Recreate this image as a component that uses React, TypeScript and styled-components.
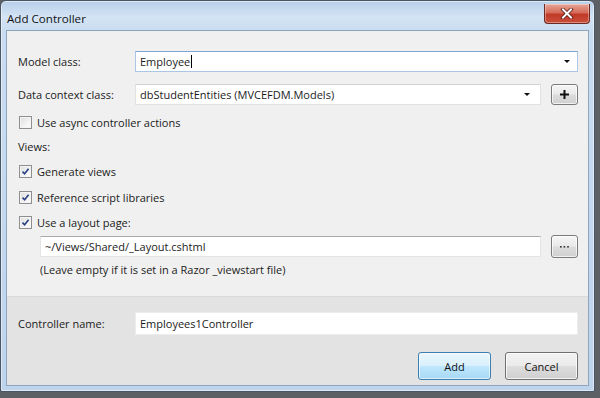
import styled, { createGlobalStyle } from "styled-components";

const GlobalStyle = createGlobalStyle`
  html, body {
    margin: 0;
    padding: 0;
    background: #5d6064;
  }
  body {
    width: 600px;
    height: 398px;
    overflow: hidden;
    font-family: "Open Sans", "Liberation Sans", sans-serif;
    font-size: 11px;
    color: #1b1b1b;
  }
`;

const Window = styled.div`
  width: 595px;
  height: 392px;
  box-sizing: border-box;
  border: 1px solid #4a5663;
  border-radius: 6px 6px 2px 2px;
  background: linear-gradient(180deg, #b7cfe9 0%, #d4e4f5 16px, #c9dcf1 30px, #bed4ed 100%);
  box-shadow: inset 0 0 0 1px rgba(255, 255, 255, 0.5);
  padding: 0 5px 5px 5px;
  display: flex;
  flex-direction: column;
`;

const TitleBar = styled.div`
  height: 29px;
  display: flex;
  justify-content: space-between;
  align-items: flex-start;
  flex: none;
`;

const Title = styled.div`
  margin-top: 10px;
  margin-left: 1px;
  line-height: 16px;
  font-size: 11.6px;
  color: #111;
`;

const CloseBtn = styled.div`
  width: 46px;
  height: 20px;
  margin-top: 3px;
  margin-right: -1px;
  box-sizing: border-box;
  border: 1px solid #6e2a22;
  border-top: none;
  border-radius: 0 0 4px 4px;
  background: linear-gradient(180deg, #e7a797 0%, #d56b5a 45%, #c13a27 55%, #c9503c 100%);
  box-shadow: inset 0 0 0 1px rgba(255, 255, 255, 0.35);
  display: flex;
  align-items: center;
  justify-content: center;
`;

const Client = styled.div`
  flex: 1;
  border: 1px solid #8ea5be;
  display: flex;
  flex-direction: column;
  background: #f0f0f0;
`;

const TopSection = styled.div`
  height: 265px;
  flex: none;
  box-sizing: border-box;
  padding: 20px 10px 0 11px;
  background: #f0f0f0;
  display: flex;
  flex-direction: column;
`;

const BottomSection = styled.div`
  flex: 1;
  box-sizing: border-box;
  border-top: 1px solid #dadada;
  background: #e3e3e3;
  padding: 15px 10px 0 11px;
  display: flex;
  flex-direction: column;
`;

const FieldRow = styled.div<{ $mt?: number; $h?: number }>`
  display: grid;
  grid-template-columns: 117px 1fr;
  align-items: center;
  height: ${(p) => p.$h ?? 21}px;
  margin-top: ${(p) => p.$mt ?? 0}px;
`;

const InputWithButton = styled.div`
  display: flex;
  gap: 10px;
  height: 100%;
`;

const Label = styled.span`
  white-space: nowrap;
`;

const TextBox = styled.div<{ $border: string; $top?: string }>`
  flex: 1;
  height: 100%;
  box-sizing: border-box;
  background: #fff;
  border: 1px solid ${(p) => p.$border};
  border-top-color: ${(p) => p.$top ?? p.$border};
  display: flex;
  align-items: center;
  padding: 0 4px;
  white-space: nowrap;
`;

const Caret = styled.span`
  display: inline-block;
  width: 1px;
  height: 13px;
  background: #000;
  margin-left: 1px;
`;

const Arrow = styled.span<{ $mr?: number }>`
  margin-left: auto;
  width: 0;
  height: 0;
  border-left: 3px solid transparent;
  border-right: 3px solid transparent;
  border-top: 3px solid #111;
  margin-right: ${(p) => p.$mr ?? 3}px;
`;

const SmallButton = styled.div<{ $h?: number; $mt?: number }>`
  width: 27px;
  flex: none;
  box-sizing: border-box;
  height: ${(p) => (p.$h ? `${p.$h}px` : "100%")};
  margin-top: ${(p) => p.$mt ?? 0}px;
  border: 1px solid #7b7b7b;
  border-radius: 3px;
  background: linear-gradient(180deg, #f6f6f6 0%, #e9e9e9 48%, #dcdcdc 52%, #d0d0d0 100%);
  box-shadow: inset 0 0 0 1px rgba(255, 255, 255, 0.7);
  display: flex;
  align-items: center;
  justify-content: center;
  color: #111;
`;

const CheckRow = styled.div<{ $mt: number }>`
  display: flex;
  align-items: center;
  gap: 5px;
  height: 16px;
  margin-top: ${(p) => p.$mt}px;
  padding-left: 1px;
`;

const Box = styled.span`
  width: 13px;
  height: 13px;
  box-sizing: border-box;
  border: 1px solid #8f8f8f;
  background: linear-gradient(135deg, #dedede 0%, #f6f6f6 70%, #ffffff 100%);
  box-shadow: inset 0 0 0 1px #f4f4f4;
  display: flex;
  align-items: center;
  justify-content: center;
`;

const PlainRow = styled.div<{ $mt: number; $indent?: number }>`
  height: 16px;
  line-height: 16px;
  margin-top: ${(p) => p.$mt}px;
  padding-left: ${(p) => p.$indent ?? 0}px;
  white-space: nowrap;
`;

const PathRow = styled.div`
  display: flex;
  gap: 10px;
  height: 21px;
  margin-top: 6px;
  padding-left: 22px;
`;

const ButtonBar = styled.div`
  display: flex;
  justify-content: flex-end;
  gap: 14px;
  margin-top: 17px;
`;

const DialogButton = styled.div<{ $primary?: boolean }>`
  width: 73px;
  height: 28px;
  box-sizing: border-box;
  border-radius: 3px;
  border: 1px solid ${(p) => (p.$primary ? "#3c7fb1" : "#707070")};
  background: ${(p) =>
    p.$primary
      ? "linear-gradient(180deg, #eaf6fd 0%, #d9f0fc 48%, #bee6fd 52%, #a7d9f5 100%)"
      : "linear-gradient(180deg, #f2f2f2 0%, #ebebeb 48%, #dddddd 52%, #cfcfcf 100%)"};
  box-shadow: inset 0 0 0 1px ${(p) => (p.$primary ? "rgba(255,255,255,0.6)" : "rgba(255,255,255,0.75)")};
  display: flex;
  align-items: center;
  justify-content: center;
  color: #111;
`;

const Check = ({ checked }: { checked?: boolean }) => (
  <Box>
    {checked && (
      <svg width="9" height="9" viewBox="0 0 9 9">
        <path d="M1.5 4.6 L3.6 6.8 L7.6 1.8" fill="none" stroke="#2a4283" strokeWidth="1.6" />
      </svg>
    )}
  </Box>
);

export default function App() {
  return (
    <>
      <GlobalStyle />
      <Window>
        <TitleBar>
          <Title>Add Controller</Title>
          <CloseBtn>
            <svg width="14" height="11" viewBox="0 0 14 11">
              <path d="M3 1.5 L11 9.5 M11 1.5 L3 9.5" stroke="#5a1a12" strokeWidth="3.6" strokeLinecap="square" />
              <path d="M3 1.5 L11 9.5 M11 1.5 L3 9.5" stroke="#fff" strokeWidth="2" strokeLinecap="square" />
            </svg>
          </CloseBtn>
        </TitleBar>
        <Client>
          <TopSection>
            <FieldRow>
              <Label>Model class:</Label>
              <TextBox $border="#a9c6e6" $top="#7fa6d2">
                Employee
                <Caret />
                <Arrow />
              </TextBox>
            </FieldRow>
            <FieldRow $mt={12}>
              <Label>Data context class:</Label>
              <InputWithButton>
                <TextBox $border="#e2e2e2" $top="#d2d2d2">
                  dbStudentEntities (MVCEFDM.Models)
                  <Arrow $mr={6} />
                </TextBox>
                <SmallButton>
                  <svg width="11" height="11" viewBox="0 0 11 11">
                    <path d="M5.5 1 V10 M1 5.5 H10" stroke="#111" strokeWidth="2" />
                  </svg>
                </SmallButton>
              </InputWithButton>
            </FieldRow>
            <CheckRow $mt={9}>
              <Check />
              <span>Use async controller actions</span>
            </CheckRow>
            <PlainRow $mt={9}>Views:</PlainRow>
            <CheckRow $mt={8}>
              <Check checked />
              <span>Generate views</span>
            </CheckRow>
            <CheckRow $mt={10}>
              <Check checked />
              <span>Reference script libraries</span>
            </CheckRow>
            <CheckRow $mt={9}>
              <Check checked />
              <span>Use a layout page:</span>
            </CheckRow>
            <PathRow>
              <TextBox $border="#e4e4e4" $top="#a8a8a8">
                ~/Views/Shared/_Layout.cshtml
              </TextBox>
              <SmallButton $h={23} $mt={-1}>
                <svg width="9" height="2" viewBox="0 0 9 2">
                  <rect x="0" y="0" width="1.6" height="1.6" fill="#333" />
                  <rect x="3.6" y="0" width="1.6" height="1.6" fill="#333" />
                  <rect x="7.2" y="0" width="1.6" height="1.6" fill="#333" />
                </svg>
              </SmallButton>
            </PathRow>
            <PlainRow $mt={5} $indent={22}>
              (Leave empty if it is set in a Razor _viewstart file)
            </PlainRow>
          </TopSection>
          <BottomSection>
            <FieldRow $h={23}>
              <Label>Controller name:</Label>
              <TextBox $border="#ececec">Employees1Controller</TextBox>
            </FieldRow>
            <ButtonBar>
              <DialogButton $primary>Add</DialogButton>
              <DialogButton>Cancel</DialogButton>
            </ButtonBar>
          </BottomSection>
        </Client>
      </Window>
    </>
  );
}
